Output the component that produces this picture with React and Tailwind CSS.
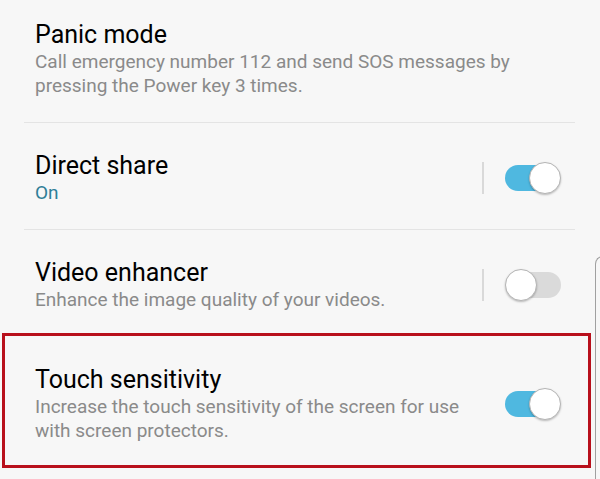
import React from "react";

function Toggle({ on }) {
  return (
    <div className="relative w-[56px] h-[32px] shrink-0">
      <div
        className={
          on
            ? "absolute left-0 top-[3px] h-[26px] w-[48px] rounded-full bg-[#4fb8e0]"
            : "absolute right-0 top-[3px] h-[26px] w-[48px] rounded-full bg-[#dadada]"
        }
      />
      <div
        className={
          on
            ? "absolute right-0 top-0 w-[32px] h-[32px] rounded-full bg-white border-[1.5px] border-[#b5b5b5] shadow-[0_1px_2px_rgba(0,0,0,0.25)]"
            : "absolute left-0 top-0 w-[32px] h-[32px] rounded-full bg-white border-[1.5px] border-[#b5b5b5] shadow-[0_1px_2px_rgba(0,0,0,0.25)]"
        }
      />
    </div>
  );
}

function Row({ title, desc, sub, toggle, sep, pad = "pl-[35px] pr-[39px]" }) {
  return (
    <div className={"flex items-center " + pad}>
      <div className="flex flex-col flex-1 min-w-0">
        <div className="text-[25px] leading-[30px] text-black">{title}</div>
        {desc && (
          <div className="text-[19px] leading-[24px] text-[#8a8a8a] pr-[10px]">{desc}</div>
        )}
        {sub && <div className="text-[19px] leading-[24px] text-[#2f7f98]">{sub}</div>}
      </div>
      {toggle !== undefined && (
        <div className="flex items-center justify-end w-[80px] shrink-0">
          {sep && <div className="w-[2px] h-[32px] bg-[#d9d9d9] mr-[21px]" />}
          <Toggle on={toggle} />
        </div>
      )}
    </div>
  );
}

export default function App() {
  return (
    <div
      className="relative w-[600px] h-[479px] overflow-hidden bg-[#f7f7f7]"
      style={{ fontFamily: "Roboto, 'Noto Sans', sans-serif" }}
    >
      <div className="h-[122px] pt-[20px]">
        <Row
          title="Panic mode"
          desc="Call emergency number 112 and send SOS messages by pressing the Power key 3 times."
          pad="pl-[35px] pr-[45px]"
        />
      </div>
      <div className="mx-[24px] w-[551px] h-px bg-[#e4e4e4]" />
      <div className="h-[106px] pt-[28px]">
        <Row title="Direct share" sub="On" toggle={true} sep />
      </div>
      <div className="mx-[24px] w-[551px] h-px bg-[#e4e4e4]" />
      <div className="h-[103px] pt-[28px]">
        <Row title="Video enhancer" desc="Enhance the image quality of your videos." toggle={false} sep />
      </div>
      <div className="ml-[2px] w-[589px] h-[135px] border-[3px] border-[#b8101c] pt-[29px]">
        <Row
          title="Touch sensitivity"
          desc="Increase the touch sensitivity of the screen for use with screen protectors."
          toggle={true}
          pad="pl-[30px] pr-[27px]"
        />
      </div>
      <div className="absolute left-[595px] top-[256px] w-[20px] h-[240px] border-l-[1.5px] border-t-[1.5px] border-[#a0a0a0] rounded-tl-[8px]" />
    </div>
  );
}
